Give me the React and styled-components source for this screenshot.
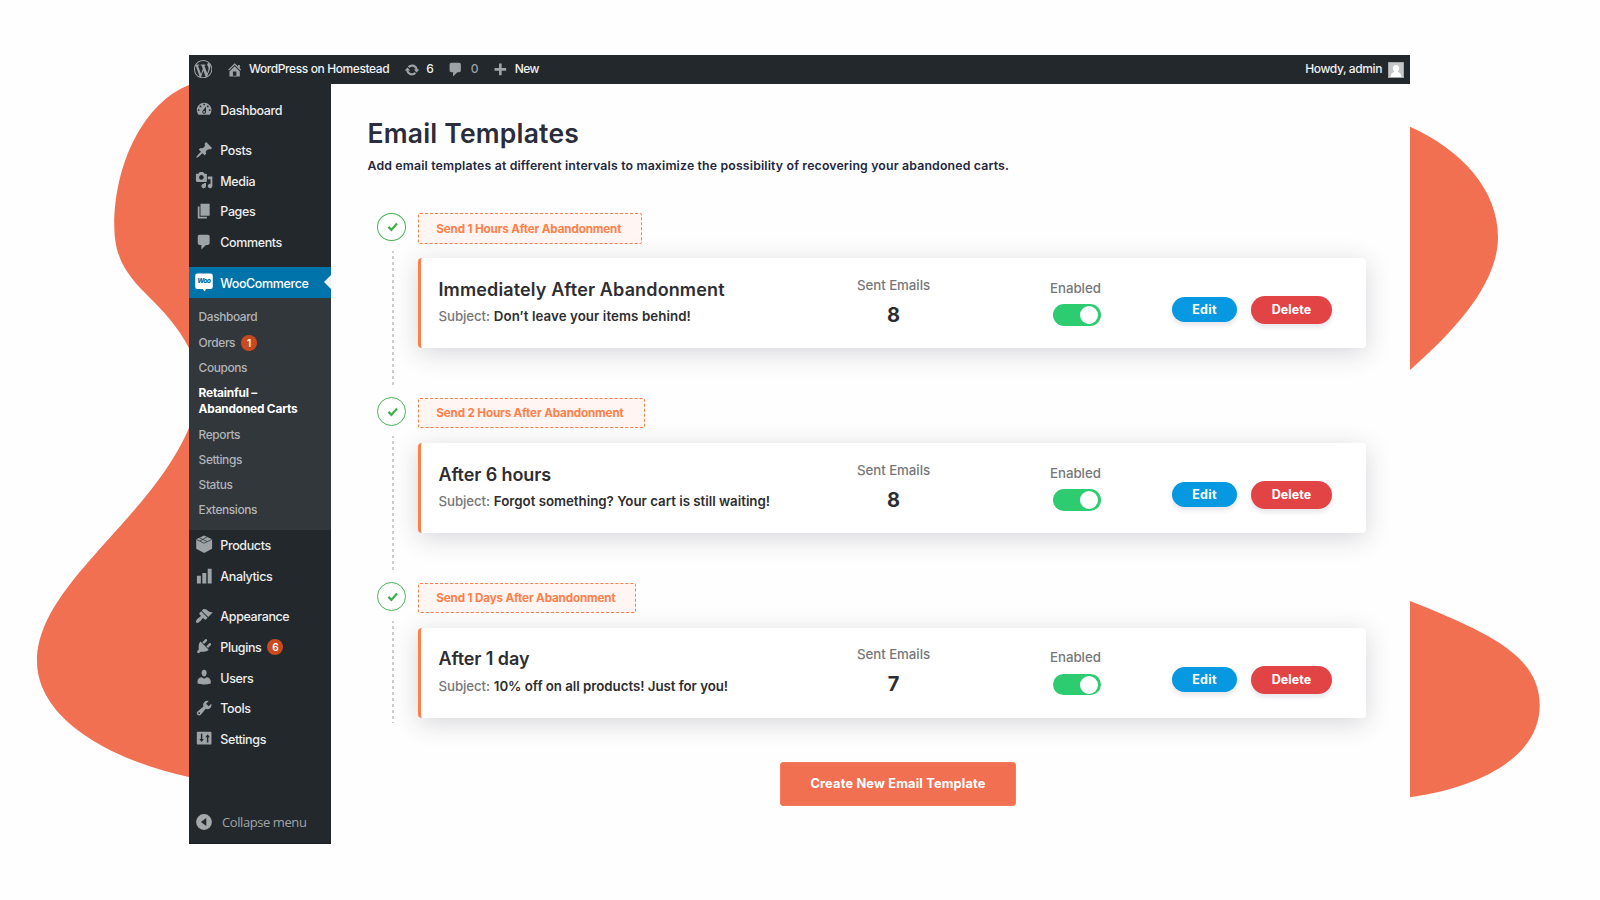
import React from "react";
import styled, { createGlobalStyle, css } from "styled-components";

const GlobalStyle = createGlobalStyle`
  * { box-sizing: border-box; }
  html, body { margin: 0; padding: 0; background: #fefefe; overflow: hidden; }
  body { font-family: Inter, "Liberation Sans", sans-serif; }
  button { font-family: inherit; border: 0; padding: 0; margin: 0; }
  h1, h2, p { margin: 0; }
`;

const Page = styled.div`
  position: relative;
  width: 1600px;
  height: 900px;
  padding: 55px 190px 0 189px;
`;

const Backdrop = styled.svg`
  position: absolute;
  inset: 0;
  fill: #f27052;
`;

const Window = styled.div`
  position: relative;
  height: 789px;
  display: flex;
  flex-direction: column;
  background: #fefefe;
`;

const AdminBar = styled.header`
  flex: none;
  height: 29px;
  display: flex;
  align-items: center;
  padding: 0 6px 0 5px;
  background: #23282d;
  font-size: 12px;
  font-weight: 500;
  line-height: 28px;
  white-space: nowrap;
`;

const BarItem = styled.span`
  display: flex;
  align-items: center;
  gap: ${(p) => p.$gap || 0}px;
  margin-left: ${(p) => p.$ml || 0}px;
  letter-spacing: ${(p) => p.$ls ?? -0.4}px;
  color: ${(p) => (p.$dim ? "#9a9fa4" : "#f0f1f2")};
`;

const Howdy = styled(BarItem)`
  margin-left: auto;
  gap: 6px;
`;

const BarText = styled.span`
  height: 29px;
`;

const Body = styled.div`
  flex: 1;
  display: flex;
  min-height: 0;
`;

const Sidebar = styled.nav`
  flex: none;
  width: 142px;
  display: flex;
  flex-direction: column;
  padding-top: 10.5px;
  background: #23282d;
`;

const MenuGroup = styled.div`
  margin-bottom: 9.5px;
`;

const MenuItem = styled.div`
  position: relative;
  height: ${(p) => (p.$active ? 31 : 30.7)}px;
  display: flex;
  align-items: center;
  padding-left: 6px;
  font-size: 12.5px;
  font-weight: 500;
  letter-spacing: -0.38px;
  color: ${(p) => (p.$active ? "#fff" : "#eceded")};
  background: ${(p) => (p.$active ? "#0073aa" : "transparent")};
`;

const MenuLabel = styled.span`
  margin-left: ${(p) => (p.$active ? 5.2 : 7)}px;
  line-height: 20px;
  padding-top: ${(p) => (p.$active ? 3.2 : 2)}px;
`;

const Pointer = styled.span`
  position: absolute;
  right: 0;
  top: 8px;
  border: 7px solid transparent;
  border-right-color: #f1f1f1;
  border-left-width: 0;
`;

const Badge = styled.span`
  width: 16px;
  height: 16px;
  margin: ${(p) => (p.$low ? 1 : 0)}px 0 0 6px;
  border-radius: 50%;
  background: #ca4a1f;
  color: #fff;
  font-size: 10px;
  font-weight: 600;
  line-height: 16px;
  letter-spacing: 0;
  text-align: center;
`;

const SubMenu = styled.div`
  height: 232px;
  padding: 6.5px 0 0 9.6px;
  background: #32373c;
`;

const SubItem = styled.div`
  min-height: ${(p) => p.$h || 25}px;
  display: flex;
  align-items: center;
  font-size: 11.9px;
  line-height: 16px;
  font-weight: 500;
  letter-spacing: -0.38px;
  color: #b0b4b7;
  ${(p) =>
    p.$current &&
    css`
      color: #fff;
      font-weight: 700;
      letter-spacing: -0.21px;
    `}
`;

const Collapse = styled.div`
  height: 44px;
  margin-top: auto;
  display: flex;
  align-items: center;
  gap: 10px;
  padding-left: 7px;
  border-bottom: 1px solid #1c1f24;
  color: #a0a3a6;
  font: 400 13px/44px "Open Sans", sans-serif;
  letter-spacing: -0.42px;
`;

const Content = styled.main`
  flex: 1;
  padding: 0 44px 0 37px;
`;

const Title = styled.h1`
  margin: 33px 0 0 -0.6px;
  font-size: 26.5px;
  line-height: 33px;
  font-weight: 600;
  letter-spacing: 0.2px;
  color: #2b2d3b;
`;

const Intro = styled.p`
  margin: 6px 0 0 -0.5px;
  font-size: 12.3px;
  line-height: 20px;
  font-weight: 600;
  letter-spacing: 0.158px;
  color: #232840;
`;

const Steps = styled.div`
  margin-top: 37px;
  padding-left: 9px;
`;

const Step = styled.section`
  height: 185px;
  display: flex;
`;

const Timeline = styled.div`
  flex: none;
  width: 41px;
  margin-top: ${(p) => (p.$first ? 0 : -1)}px;
`;

const Ring = styled.div`
  width: 29px;
  height: ${(p) => (p.$first ? 28 : 29)}px;
  display: flex;
  align-items: center;
  justify-content: center;
  border: 1px solid #4bb35a;
  border-radius: 50%;
  padding-left: 2px;
`;

const Dots = styled.div`
  width: 2px;
  height: ${(p) => p.$h}px;
  margin: 10px 0 0 15px;
  background: repeating-linear-gradient(#cdced1 0 2px, transparent 2px 5px, #cdced1 5px 6px);
`;

const StepBody = styled.div`
  width: 948px;
  display: flex;
  flex-direction: column;
  align-items: flex-start;
`;

const Delay = styled.div`
  height: ${(p) => (p.$first ? 31 : 30)}px;
  margin-bottom: ${(p) => (p.$first ? 14 : 15)}px;
  width: ${(p) => p.$w}px;
  padding-left: 17.3px;
  border: 1px dashed #ff7f4a;
  border-radius: 2px;
  background: #fff5f2;
  color: #ff7f4a;
  font-size: 11.7px;
  line-height: ${(p) => (p.$first ? 30 : 28.5)}px;
  font-weight: 700;
  letter-spacing: -0.16px;
  white-space: nowrap;
`;

const Card = styled.article`
  width: 948px;
  height: 90px;
  display: flex;
  align-items: flex-start;
  padding-left: 18px;
  border-left: 3px solid #ff7f4a;
  border-radius: 4px;
  background: #fff;
  box-shadow: 0 5px 26px rgba(40, 40, 65, 0.19);
  white-space: nowrap;
`;

const Info = styled.div`
  width: 405px;
  margin-left: -0.5px;
  padding-top: ${(p) => 20 - p.$lift}px;
`;

const Name = styled.h2`
  font-size: 18px;
  line-height: 24px;
  font-weight: 600;
  letter-spacing: ${(p) => p.$ls}px;
  color: #2e2e31;
`;

const Subject = styled.p`
  margin-top: ${(p) => 3.7 + p.$lift}px;
  font-size: 13.3px;
  line-height: 20px;
  font-weight: 600;
  letter-spacing: ${(p) => p.$ls}px;
  color: #2e2e31;
`;

const SubjectKey = styled.span`
  display: inline-block;
  width: 55.3px;
  font-weight: 500;
  letter-spacing: -0.1px;
  color: #77777a;
`;

const Sent = styled.div`
  width: 100px;
  padding-top: ${(p) => 17.3 - p.$lift}px;
  text-align: center;
`;

const Caption = styled.div`
  font-size: 13.3px;
  line-height: 20px;
  font-weight: 500;
  letter-spacing: -0.05px;
  color: #77777a;
`;

const Count = styled.div`
  margin-top: 7.5px;
  font-size: 20px;
  line-height: 24px;
  font-weight: 700;
  color: #2e2e31;
`;

const Status = styled.div`
  width: 56px;
  margin-left: 106.5px;
  padding-top: ${(p) => 20 - p.$lift}px;
`;

const Toggle = styled.div`
  width: 48px;
  height: ${(p) => 22 - p.$lift}px;
  margin: ${(p) => 6 + p.$lift}px 0 0 3px;
  display: flex;
  align-items: center;
  justify-content: flex-end;
  padding-right: 3px;
  border-radius: 11px;
  background: #2ecc71;
`;

const Knob = styled.span`
  width: 18px;
  height: 18px;
  border-radius: 50%;
  background: #fff;
`;

const Actions = styled.div`
  display: flex;
  align-items: center;
  gap: 14px;
  margin: 38px 0 0 66px;
  height: 27.5px;
`;

const Pill = styled.button`
  width: ${(p) => (p.$danger ? 81 : 65)}px;
  height: ${(p) => (p.$danger ? 28 : 25)}px;
  border-radius: 14px;
  background: ${(p) => (p.$danger ? "#e24446" : "#0798e2")};
  color: #fff;
  font-size: 12.5px;
  font-weight: 700;
  letter-spacing: ${(p) => (p.$danger ? 0.06 : 0.3)}px;
  box-shadow: 0 3px 5px rgba(50, 50, 93, 0.13);
`;

const CreateButton = styled.button`
  display: block;
  width: 236px;
  height: 44px;
  margin: -6px 0 0 412px;
  padding-bottom: 2px;
  border: 1px solid #f47c60;
  border-radius: 3px;
  background: #f27052;
  color: #fff;
  font-size: 12.8px;
  font-weight: 700;
  letter-spacing: 0.18px;
`;

const Glyph = styled.svg`
  flex: none;
  display: block;
  fill: ${(p) => p.$color || "#9ea3a8"};
  position: relative;
  top: ${(p) => p.$dy || 0}px;
`;

const paths = {
  wordpress:
    "M20 10c0-5.51-4.49-10-10-10C4.48 0 0 4.49 0 10c0 5.52 4.48 10 10 10 5.51 0 10-4.48 10-10zM7.78 15.37L4.37 6.22c.55-.02 1.17-.08 1.17-.08.5-.06.44-1.13-.06-1.11 0 0-1.45.11-2.37.11-.18 0-.37 0-.58-.01C4.12 2.69 6.87 1.11 10 1.11c2.33 0 4.45.87 6.05 2.34-.68-.11-1.65.39-1.65 1.58 0 .74.45 1.36.9 2.1.35.61.55 1.36.55 2.46 0 1.49-1.4 5-1.4 5l-3.03-8.37c.54-.02.82-.17.82-.17.5-.05.44-1.25-.06-1.22 0 0-1.44.12-2.38.12-.87 0-2.33-.12-2.33-.12-.5-.03-.56 1.2-.06 1.22l.92.08 1.26 3.41zM17.41 10c.24-.64.74-1.87.43-4.25.7 1.29 1.05 2.71 1.05 4.25 0 3.29-1.73 6.24-4.4 7.78.97-2.59 1.94-5.2 2.92-7.78zM6.1 18.09C3.12 16.65 1.11 13.53 1.11 10c0-1.3.23-2.48.72-3.59C3.25 10.3 4.67 14.2 6.1 18.09zm4.03-6.63l2.58 6.98c-.86.29-1.76.45-2.71.45-.79 0-1.57-.11-2.29-.33.81-2.38 1.62-4.74 2.42-7.1z",
  home: "M16 8.5l1.53 1.53-1.06 1.06L10 4.6l-6.47 6.49-1.06-1.06L10 2.5l4 4v-2h2v4zm-6-2.46l6 5.99V18H4v-5.97zM12 17v-5H8v5h4z",
  update:
    "M10.2 3.28c3.53 0 6.43 2.61 6.92 6h2.08l-3.5 4-3.5-4h2.32c-.45-1.97-2.21-3.45-4.32-3.45-1.45 0-2.73.71-3.54 1.78L4.95 5.66C6.23 4.2 8.11 3.28 10.2 3.28zm-.4 13.44c-3.52 0-6.43-2.61-6.92-6H.8l3.5-4c1.17 1.33 2.33 2.67 3.5 4H5.48c.45 1.97 2.21 3.45 4.32 3.45 1.45 0 2.73-.71 3.54-1.78l1.71 1.95c-1.28 1.46-3.15 2.38-5.25 2.38z",
  comment: "M5 2h9c1.1 0 2 .9 2 2v7c0 1.1-.9 2-2 2h-2l-5 5v-5H5c-1.1 0-2-.9-2-2V4c0-1.1.9-2 2-2z",
  plus: "M17 8.4v3.2h-5.4V17H8.4v-5.4H3V8.4h5.4V3h3.2v5.4z",
  dashboard:
    "M3.76 16h12.48c1.1-1.37 1.76-3.11 1.76-5 0-4.42-3.58-8-8-8s-8 3.58-8 8c0 1.89.66 3.63 1.76 5zM10 4c.55 0 1 .45 1 1s-.45 1-1 1-1-.45-1-1 .45-1 1-1zM6 6c.55 0 1 .45 1 1s-.45 1-1 1-1-.45-1-1 .45-1 1-1zm8 0c.55 0 1 .45 1 1s-.45 1-1 1-1-.45-1-1 .45-1 1-1zm-5.37 5.55L12 7v6c0 1.1-.9 2-2 2s-2-.9-2-2c0-.57.24-1.08.63-1.45zM4 10c.55 0 1 .45 1 1s-.45 1-1 1-1-.45-1-1 .45-1 1-1zm12 0c.55 0 1 .45 1 1s-.45 1-1 1-1-.45-1-1 .45-1 1-1zm-5 3c0-.55-.45-1-1-1s-1 .45-1 1 .45 1 1 1 1-.45 1-1z",
  posts:
    "M10.44 3.02l1.82-1.82 6.36 6.35-1.83 1.82c-1.05-.68-2.48-.57-3.41.36l-.75.75c-.92.93-1.04 2.35-.35 3.41l-1.83 1.82-2.41-2.41-2.8 2.79c-.42.42-3.38 2.71-3.8 2.29s1.86-3.39 2.28-3.81l2.79-2.79L4.1 9.36l1.83-1.82c1.05.69 2.48.57 3.4-.36l.75-.75c.93-.92 1.05-2.35.36-3.41z",
  media:
    "M13 11V4c0-.55-.45-1-1-1h-1.67L9 1H5L3.67 3H2c-.55 0-1 .45-1 1v7c0 .55.45 1 1 1h10c.55 0 1-.45 1-1zM7 4.5c1.38 0 2.5 1.12 2.5 2.5S8.38 9.5 7 9.5 4.5 8.38 4.5 7 5.62 4.5 7 4.5zM14 6h5v10.5c0 1.38-1.12 2.5-2.5 2.5S14 17.88 14 16.5s1.12-2.5 2.5-2.5c.17 0 .34.02.5.05V9h-3V6zm-4 8.05V13h2v3.5c0 1.38-1.12 2.5-2.5 2.5S7 17.88 7 16.5 8.12 14 9.5 14c.17 0 .34.02.5.05z",
  pages: "M6 15V2h10v13H6zm-1 1h8v2H3V5h2v11z",
  analytics: "M18.2 18V1.8h-4.3V18h4.3zm-5.9 0V6.5H8V18h4.3zm-5.9 0V9.7H2.1V18h4.3z",
  appearance:
    "M14.48 11.06L7.41 3.99l1.5-1.5c.5-.56 2.3-.47 3.51.32 1.21.8 1.43 1.28 2.91 2.1 1.18.64 2.45 1.26 4.45.85zm-.71.71L6.7 4.7 4.93 6.47c-.39.39-.39 1.02 0 1.41l1.06 1.06c.39.39.39 1.03 0 1.42-.6.6-1.43 1.11-2.21 1.69-.35.26-.7.53-1.01.84C1.43 14.23.4 16.08 1.4 17.07c.99 1 2.84-.03 4.18-1.36.31-.31.58-.66.85-1.02.57-.78 1.08-1.61 1.69-2.21.39-.39 1.02-.39 1.41 0l1.06 1.06c.39.39 1.02.39 1.41 0z",
  plugins:
    "M13.11 4.36L9.87 7.6 8 5.73l3.24-3.24c.35-.34 1.05-.2 1.56.32.52.51.66 1.21.31 1.55zm-8 1.77l.91-1.12 9.01 9.01-1.19.84c-.71.71-2.63 1.16-3.82 1.16H6.14L4.9 17.26c-.59.59-1.54.59-2.12 0-.59-.58-.59-1.53 0-2.12l1.24-1.24v-3.88c0-1.13.4-3.19 1.09-3.89zm7.26 3.97l3.24-3.24c.34-.35 1.04-.21 1.55.31.52.51.66 1.21.31 1.55l-3.24 3.25z",
  users:
    "M10 9.25c-2.27 0-2.73-3.44-2.73-3.44C7 4.02 7.82 2 9.97 2c2.16 0 2.98 2.02 2.71 3.81 0 0-.41 3.44-2.68 3.44zm0 2.57L12.72 10c2.39 0 4.52 2.33 4.52 4.53v2.49s-3.65 1.13-7.24 1.13c-3.65 0-7.24-1.13-7.24-1.13v-2.49c0-2.25 1.94-4.48 4.47-4.48z",
  tools:
    "M16.68 9.77c-1.34 1.34-3.3 1.67-4.95.99l-5.41 6.52c-.99.99-2.59.99-3.58 0s-.99-2.59 0-3.57l6.52-5.42c-.68-1.65-.35-3.61.99-4.95 1.28-1.28 3.12-1.62 4.72-1.06l-2.89 2.89 2.82 2.82 2.86-2.87c.53 1.58.18 3.39-1.08 4.65zM3.81 16.21c.4.39 1.04.39 1.43 0 .4-.4.4-1.04 0-1.43-.39-.4-1.03-.4-1.43 0-.39.39-.39 1.03 0 1.43z",
  settings:
    "M18 16V4c0-.55-.45-1-1-1H3c-.55 0-1 .45-1 1v12c0 .55.45 1 1 1h14c.55 0 1-.45 1-1zM8 11h1.7L7.2 14.2 4.7 11H6.4V5.2H8V11zm5-2h-1.7l2.5-3.2L16.3 9H14.6v5.8H13V9z",
};

const Icon = ({ name, size = 18.3, dy }) => (
  <Glyph viewBox="0 0 20 20" width={size} height={size} $dy={dy} fillRule="evenodd">
    <path d={paths[name]} />
  </Glyph>
);

const ProductsIcon = () => (
  <Glyph viewBox="0 0 20 20" width="18.3" height="18.3" $dy={-1.2}>
    <path d="M10 .6l8.7 4.1v10.4L10 19.6l-8.700-4.500V4.700z" />
    <path
      d="M1.5 4.900L10 9l8.500-4.100M5 3.200l8.300 4M5.500 6.500l7.600-4.300"
      fill="none"
      stroke="#23282d"
      strokeWidth="0.75"
    />
  </Glyph>
);

const WooIcon = () => (
  <Glyph viewBox="0 0 20 20" width="20" height="20" $color="#fff" $dy={-0.5}>
    <path d="M2.500 1.500h13a2.300 2.300 0 0 1 2.300 2.300v11a2.300 2.300 0 0 1-2.300 2.300h-4.500l-1.300 2.400-2-2.400H2.500A2.300 2.300 0 0 1 .2 14.800v-11A2.300 2.300 0 0 1 2.500 1.500z" />
    <text x="8.800" y="11.300" textAnchor="middle" fontSize="6.600" fontWeight="800" fontStyle="italic" letterSpacing="-0.500" fill="#0073aa">
      Woo
    </text>
  </Glyph>
);

const Avatar = () => (
  <svg width="16" height="16" viewBox="0 0 16 16">
    <rect width="16" height="16" fill="#a4a6a8" />
    <rect x="1" y="1" width="14" height="14" fill="#c6c7c8" />
    <path d="M8 3.100c2 0 3.200 1.400 3.200 3.200 0 1.200-.5 2.200-1.300 2.800v.8c1.800.6 3.300 1.800 3.600 5.100h-11c.3-3.300 1.800-4.500 3.600-5.100v-.8c-.8-.6-1.300-1.600-1.300-2.800 0-1.800 1.200-3.200 3.200-3.200z" fill="#fff" />
  </svg>
);

const CollapseIcon = () => (
  <svg width="16" height="16" viewBox="0 0 16 16">
    <circle cx="8" cy="8" r="7.900" fill="#a5a8aa" />
    <path d="M10.300 4v8L4.900 8z" fill="#23282d" />
  </svg>
);

const Check = () => (
  <svg width="12" height="10" viewBox="0 0 12 10">
    <path d="M1.400 4.900l3 3 5.600-6.300" fill="none" stroke="#3fae4c" strokeWidth="2.200" />
  </svg>
);

const Entry = ({ icon, label, badge }) => (
  <MenuItem>
    {icon === "products" ? <ProductsIcon /> : <Icon name={icon} dy={-0.3} />}
    <MenuLabel>{label}</MenuLabel>
    {badge && <Badge $low>{badge}</Badge>}
  </MenuItem>
);

const steps = [
  { delay: "Send 1 Hours After Abandonment", w: 224, name: "Immediately After Abandonment", nls: 0.135, subject: "Don’t leave your items behind!", sls: 0.08, sent: 8, line: 135, lift: 0 },
  { delay: "Send 2 Hours After Abandonment", w: 227, name: "After 6 hours", nls: -0.11, subject: "Forgot something? Your cart is still waiting!", sls: -0.01, sent: 8, line: 135, lift: 0 },
  { delay: "Send 1 Days After Abandonment", w: 218, name: "After 1 day", nls: -0.08, subject: "10% off on all products! Just for you!", sls: -0.04, sent: 7, line: 102, lift: 1 },
];

export default function App() {
  return (
    <Page>
      <GlobalStyle />
      <Backdrop width="1600" height="900" viewBox="0 0 1600 900">
        <path d="M189 85C145 102 114.300 162 114.300 226C114.300 286 160 292 189 348V428C150 520 37 585 37 661C37 722 118 762 189 777H200V85z" />
        <path d="M1400 122L1410 126.700C1462 150 1498 190 1498 237C1498 282 1458 328 1410 370H1400z" />
        <path d="M1400 597L1410 601C1490 633 1539.700 656 1539.700 705.500C1539.700 753 1488 786 1410 797.300H1400z" />
      </Backdrop>
      <Window>
        <AdminBar>
          <Icon name="wordpress" size={18.3} dy={-0.3} />
          <BarItem $ml={13.5} $gap={5.8}>
            <Icon name="home" size={17.3} />
            <BarText>WordPress on Homestead</BarText>
          </BarItem>
          <BarItem $ml={14.5} $gap={6.5}>
            <Icon name="update" size={16} />
            <BarText>6</BarText>
          </BarItem>
          <BarItem $ml={14} $gap={6} $dim>
            <Icon name="comment" size={17.3} />
            <BarText>0</BarText>
          </BarItem>
          <BarItem $ml={14} $gap={6} $ls={-0.6}>
            <Icon name="plus" size={16.7} />
            <BarText>New</BarText>
          </BarItem>
          <Howdy>
            <BarText>Howdy, admin</BarText>
            <Avatar />
          </Howdy>
        </AdminBar>
        <Body>
          <Sidebar>
            <MenuGroup>
              <Entry icon="dashboard" label="Dashboard" />
            </MenuGroup>
            <MenuGroup>
              <Entry icon="posts" label="Posts" />
              <Entry icon="media" label="Media" />
              <Entry icon="pages" label="Pages" />
              <Entry icon="comment" label="Comments" />
            </MenuGroup>
            <MenuItem $active>
              <WooIcon />
              <MenuLabel $active>WooCommerce</MenuLabel>
              <Pointer />
            </MenuItem>
            <SubMenu>
              <SubItem>Dashboard</SubItem>
              <SubItem $h={26.5}>
                Orders<Badge>1</Badge>
              </SubItem>
              <SubItem $h={24.5}>Coupons</SubItem>
              <SubItem $current $h={42}>
                Retainful –<br />
                Abandoned Carts
              </SubItem>
              <SubItem>Reports</SubItem>
              <SubItem>Settings</SubItem>
              <SubItem>Status</SubItem>
              <SubItem>Extensions</SubItem>
            </SubMenu>
            <MenuGroup>
              <Entry icon="products" label="Products" />
              <Entry icon="analytics" label="Analytics" />
            </MenuGroup>
            <Entry icon="appearance" label="Appearance" />
            <Entry icon="plugins" label="Plugins" badge="6" />
            <Entry icon="users" label="Users" />
            <Entry icon="tools" label="Tools" />
            <Entry icon="settings" label="Settings" />
            <Collapse>
              <CollapseIcon />
              Collapse menu
            </Collapse>
          </Sidebar>
          <Content>
            <Title>Email Templates</Title>
            <Intro>
              Add email templates at different intervals to maximize the possibility of recovering your abandoned carts.
            </Intro>
            <Steps>
              {steps.map((s, i) => (
                <Step key={s.name}>
                  <Timeline $first={i === 0}>
                    <Ring $first={i === 0}>
                      <Check />
                    </Ring>
                    <Dots $h={s.line} />
                  </Timeline>
                  <StepBody>
                    <Delay $first={i === 0} $w={s.w}>
                      {s.delay}
                    </Delay>
                    <Card>
                      <Info $lift={s.lift}>
                        <Name $ls={s.nls}>{s.name}</Name>
                        <Subject $ls={s.sls} $lift={s.lift}>
                          <SubjectKey>Subject:</SubjectKey>
                          {s.subject}
                        </Subject>
                      </Info>
                      <Sent $lift={s.lift}>
                        <Caption>Sent Emails</Caption>
                        <Count>{s.sent}</Count>
                      </Sent>
                      <Status $lift={s.lift}>
                        <Caption>Enabled</Caption>
                        <Toggle $lift={s.lift}>
                          <Knob />
                        </Toggle>
                      </Status>
                      <Actions>
                        <Pill>Edit</Pill>
                        <Pill $danger>Delete</Pill>
                      </Actions>
                    </Card>
                  </StepBody>
                </Step>
              ))}
            </Steps>
            <CreateButton>Create New Email Template</CreateButton>
          </Content>
        </Body>
      </Window>
    </Page>
  );
}
